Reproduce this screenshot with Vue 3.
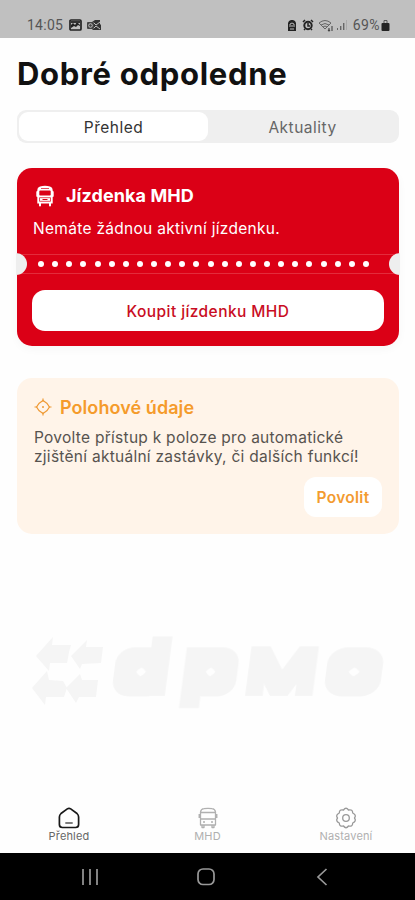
<script setup>
const tabs = ['Přehled', 'Aktuality']
const dots = 24
</script>

<template>
  <div class="phone">
    <header class="status">
      <span class="clock">14:05</span>
      <svg class="pic" width="13" height="12" viewBox="0 0 13 12">
        <rect x="1" y="1" width="11" height="10" rx="1" fill="none" stroke="#222" stroke-width="1.7" />
        <path d="M2 9V6l2-2 2 2 2-3 3 3v1L9 6 7 8 5 7z" fill="#222" />
        <rect x="2" y="2" width="9" height="2" fill="#333" />
      </svg>
      <svg class="mail" width="15" height="12" viewBox="0 0 15 12">
        <path d="M5 3l3-2h5v4l1 1v5H6l-2-2z" fill="#333" />
        <path d="M6 3l3 3 4-3M6 10l3-3 4 3" fill="none" stroke="#c0c0c0" />
        <rect x="0" y="3" width="7" height="7" rx="1" fill="#444" />
        <circle cx="3.5" cy="6.5" r="1.8" fill="none" stroke="#c0c0c0" />
      </svg>
      <div class="status-right">
        <svg width="10" height="13" viewBox="0 0 10 13">
          <path d="M2 2l2-1h2l2 1 1 2v8H1V4z" fill="#222" />
          <path d="M3 8V5l2-1 2 1v3M3 10h4M5 6v2" fill="none" stroke="#bbb" />
        </svg>
        <svg class="alarm" width="12" height="12" viewBox="0 0 12 12">
          <circle cx="6" cy="6.5" r="3.7" fill="none" stroke="#222" stroke-width="2" />
          <path d="M1 3l2-2m6 0l2 2M2 11l1-1m7 1l-1-1M6 4v3h2" fill="none" stroke="#222" stroke-width="1.5" />
        </svg>
        <svg class="wifi" width="17" height="13" viewBox="0 0 17 13">
          <path d="M1 4Q7-1 13 4M3 6q4-3 8 0M5 8q2-2 4 0L7 10zM1 4l6 6 6-6" fill="none" stroke="#666" stroke-width="1" />
          <path d="M11 9v3m-1-1l1 1 1-1M14 12V7" fill="none" stroke="#444" stroke-width="1.1" />
        </svg>
        <svg class="signal" width="12" height="12" viewBox="0 0 12 12">
          <path d="M1 9h1v2H1zM4 7h1.4v4H4zM7 4h1.4v7H7z" fill="#666" />
          <path d="M10 1h1v10h-1z" fill="#aaa" />
        </svg>
        <span class="percent">69%</span>
        <svg width="9" height="12" viewBox="0 0 9 12">
          <path d="M3 5V1.5h3V5" fill="none" stroke="#555" />
          <rect x=".5" y="4" width="8" height="8" rx="1" fill="#222" />
        </svg>
      </div>
    </header>

    <main class="content">
      <h1>Dobré odpoledne</h1>
      <div class="tabs">
        <button v-for="(t, i) in tabs" :key="t" :class="{ active: i === 0 }"><span>{{ t }}</span></button>
      </div>

      <section class="ticket">
        <div class="ticket-top">
          <h2>
            <svg width="18" height="22" viewBox="0 0 18 22">
              <path d="M4 1.500Q9 .2 14 1.500Q16.700 2.300 16.700 5V18.500H1.300V5Q1.300 2.300 4 1.500z" fill="#fff" />
              <path d="M1.300 7v4M16.700 7v4M4 18v2.500M14 18v2.500" stroke="#fff" stroke-width="2" stroke-linecap="round" />
              <rect x="3.300" y="5.600" width="11.400" height="5" rx=".8" fill="#db0016" />
              <path d="M5 3.500h8M3.500 12.700H14.500v3.600H3.500z" fill="none" stroke="#db0016" stroke-width=".7" />
              <path d="M6.500 14.500h5" stroke="#db0016" />
            </svg>
            <span>Jízdenka MHD</span>
          </h2>
          <p>Nemáte žádnou aktivní jízdenku.</p>
        </div>
        <div class="perforation">
          <i class="notch left"></i>
          <i v-for="n in dots" :key="n" class="dot"></i>
          <i class="notch right"></i>
        </div>
        <button class="buy"><span>Koupit jízdenku MHD</span></button>
      </section>

      <section class="location">
        <h2>
          <svg width="18" height="18" viewBox="0 0 18 18" fill="none" stroke="#ef9a35" stroke-width="1.200">
            <path d="M9 2.500 12.800 5.200 15.500 9 12.800 12.800 9 15.500 5.200 12.800 2.500 9 5.200 5.200z" stroke-linejoin="round" />
            <path d="M9 .5v3M9 14.500v3M.5 9h3M14.500 9h3" />
            <circle cx="9" cy="9" r="1" fill="#ef9a35" stroke="none" />
          </svg>
          <span>Polohové údaje</span>
        </h2>
        <p>Povolte přístup k poloze pro automatické<br>zjištění aktuální zastávky, či dalších funkcí!</p>
        <button class="allow"><span>Povolit</span></button>
      </section>

      <svg class="logo" width="360" height="80" viewBox="30 630 360 80" fill="#f5f5f5">
        <defs>
          <filter id="block" filterUnits="userSpaceOnUse" x="80" y="-90" width="340" height="140">
            <feMorphology operator="dilate" radius="8 7.500" />
          </filter>
          <filter id="block-m" filterUnits="userSpaceOnUse" x="80" y="-90" width="340" height="140">
            <feMorphology operator="dilate" radius="7 6" />
          </filter>
        </defs>
        <path d="M36 656 53 637l-1 8h19l-2 7-2 11H50l-1 8z" />
        <path d="M71 656 87 640l-1 7h17l-2 16-19 1-2 5z" />
        <path d="M32 688 47 671l2 9 14 1 4 7-3 9H46l-1 8z" />
        <path d="M66 688 80 674l2 6h16l-2 17H79l-3 6z" />
        <g class="wordmark" transform="translate(0 688) skewX(-7.500)">
          <g filter="url(#block)">
            <text transform="translate(115 0) scale(1.420 1)">d</text>
            <text transform="translate(182 0) scale(1.420 1)">p</text>
            <text transform="translate(327 0) scale(1.420 1)">o</text>
          </g>
          <g filter="url(#block-m)">
            <text class="cap" transform="translate(245 2) scale(1.520 1)">M</text>
          </g>
        </g>
      </svg>
    </main>

    <nav class="tabbar">
      <div class="item on">
        <svg width="22" height="22" viewBox="0 0 22 22" fill="none" stroke="#181818" stroke-width="1.700" stroke-linejoin="round">
          <path d="M9.300 1.900 3 6.500Q1.400 8 1.400 10v7.500Q1.400 20.500 4.400 20.500H17.600Q20.600 20.500 20.600 17.500V10Q20.600 8 19 6.500L12.700 1.900Q11 .8 9.300 1.900z" />
          <path d="M7.300 16h7.400" stroke="#666" />
        </svg>
        <span>Přehled</span>
      </div>
      <div class="item bus">
        <svg width="22" height="22" viewBox="0 0 22 22" fill="none" stroke="#b0b0b0" stroke-width="1.300" stroke-linejoin="round">
          <path d="M3.500 5Q4 2 7 1.700Q11 1 15 1.700Q18 2 18.500 5V18H3.500zM3.500 5.500h15M3.500 12h15M5 18v2.500h2V18M15 18v2.500h2V18M2.200 7v4M19.800 7v4M6 15h2M14 15h2" />
        </svg>
        <span>MHD</span>
      </div>
      <div class="item settings">
        <svg width="22" height="22" viewBox="0 0 22 22" fill="none" stroke="#999" stroke-width="1.300" stroke-linejoin="round">
          <path d="M8.500 3Q11-.5 13.500 3Q17.700 2 17.700 6Q21.800 8 19.500 11Q21.800 14 17.700 16Q17.700 20 13.500 19Q11 22.500 8.500 19Q4.300 20 4.300 16Q.2 14 2.500 11Q.2 8 4.300 6Q4.300 2 8.500 3z" />
          <circle cx="11" cy="11" r="3.300" />
        </svg>
        <span>Nastavení</span>
      </div>
    </nav>

    <footer class="system">
      <svg width="18" height="18" viewBox="0 0 18 18"><path d="M2 1v16M9 1v16M16 1v16" stroke="#999" stroke-width="1.700" /></svg>
      <svg width="18" height="18" viewBox="0 0 18 18"><rect x="1" y="1" width="16" height="15.500" rx="5" fill="none" stroke="#999" stroke-width="1.700" /></svg>
      <svg width="18" height="18" viewBox="0 0 18 18"><path d="M13.500 1 5 9l8.500 8" fill="none" stroke="#999" stroke-width="1.700" /></svg>
    </footer>
  </div>
</template>

<style>
body { background: #fefefe; }
</style>

<style scoped>
.phone { width: 415px; height: 900px; display: flex; flex-direction: column; overflow: hidden; background: #fefefe; font-family: Inter, "Liberation Sans", sans-serif; color: #111; }
.phone * { box-sizing: border-box; }
h1, h2, p { margin: 0; }
button { border: 0; padding: 0; font: inherit; }
svg { flex: none; display: block; }
span { white-space: nowrap; }
.status { flex: none; height: 38px; padding: 12px 25px 0 27px; background: #c0c0c0; display: flex; align-items: center; font: 14px Roboto, sans-serif; color: #555; }
.pic { margin-left: 6px; }
.mail { margin-left: 5px; }
.clock { letter-spacing: .25px; }
.status-right { margin-left: auto; display: flex; align-items: center; }
.alarm { margin-left: 5px; }
.wifi { margin-left: 4px; }
.signal { margin-left: 1px; }
.percent { margin-left: 5px; margin-right: 1px; letter-spacing: .4px; }
.content { flex: 1; padding: 17px 16px 0 17px; display: flex; flex-direction: column; }
h1 { flex: none; font-size: 31px; font-weight: 700; line-height: 38px; letter-spacing: .7px; white-space: nowrap; }
.tabs { flex: none; margin-top: 17px; height: 33px; padding: 2px; border-radius: 9px; background: #efefef; display: grid; grid-template-columns: 189px 1fr; }
.tabs button { border-radius: 9px; background: none; color: #666; font-size: 15.500px; letter-spacing: .5px; padding-top: 1px; }
.tabs .active { background: #fff; color: #333; }
.ticket { flex: none; margin-top: 25px; height: 178px; border-radius: 15px; background: #db0016; color: #fff; box-shadow: 0 3px 10px #00000009; display: flex; flex-direction: column; }
.ticket-top { height: 86px; padding: 16px 16px 0; }
.ticket h2 { height: 24px; display: flex; align-items: center; gap: 12px; padding-left: 3px; font-size: 18px; font-weight: 700; letter-spacing: .08px; }
.ticket h2 span { margin-top: -1px; }
.ticket p { margin-top: 10px; line-height: 22px; font-size: 15.500px; letter-spacing: .3px; }
.perforation { height: 20px; position: relative; padding: 0 30px 0 21px; display: flex; align-items: center; justify-content: space-between; border-top: 1px solid #e32c3c; border-bottom: 1px solid #e32c3c; }
.dot { width: 6px; height: 6px; border-radius: 50%; background: #fff; }
.notch { position: absolute; top: -2px; width: 11px; height: 22px; background: #eee; }
.left { left: -1px; border-radius: 0 11px 11px 0; }
.right { right: -1px; border-radius: 11px 0 0 11px; }
.buy { margin: 16px 15px 0 15px; height: 41px; border-radius: 13px; background: #fff; color: #c90d23; font-size: 15.500px; font-weight: 500; letter-spacing: .42px; padding-top: 1px; }
.location { flex: none; margin-top: 32px; height: 156px; border-radius: 15px; padding: 17px 17px 17px; background: #fff4e9; display: flex; flex-direction: column; }
.location h2 { height: 24px; display: flex; align-items: center; gap: 8px; font-size: 18px; font-weight: 600; letter-spacing: .07px; color: #f59b2b; }
.location p { margin-top: 9px; font-size: 15.500px; line-height: 19px; letter-spacing: .27px; color: #57534f; white-space: nowrap; }
.allow { align-self: flex-end; margin-top: 11px; width: 78px; height: 40px; border-radius: 12px; background: #fff; color: #f39b30; font-size: 15.500px; font-weight: 600; letter-spacing: .3px; }
.logo { flex: none; margin: 96px 0 0 13px; }
.wordmark { font: 200 60px Inter, "DejaVu Sans", sans-serif; }
.cap { font-size: 51px; }
.tabbar { flex: none; height: 51px; padding: 0 34px; display: flex; justify-content: space-between; }
.item { width: 70px; display: flex; flex-direction: column; align-items: center; padding-top: 5px; font-size: 11px; line-height: 14px; letter-spacing: .15px; color: #b0b0b0; }
.on { color: #666; }
.system { flex: none; height: 47px; background: #000; display: flex; justify-content: space-between; padding: 15px 84px 0 81px; }
</style>
